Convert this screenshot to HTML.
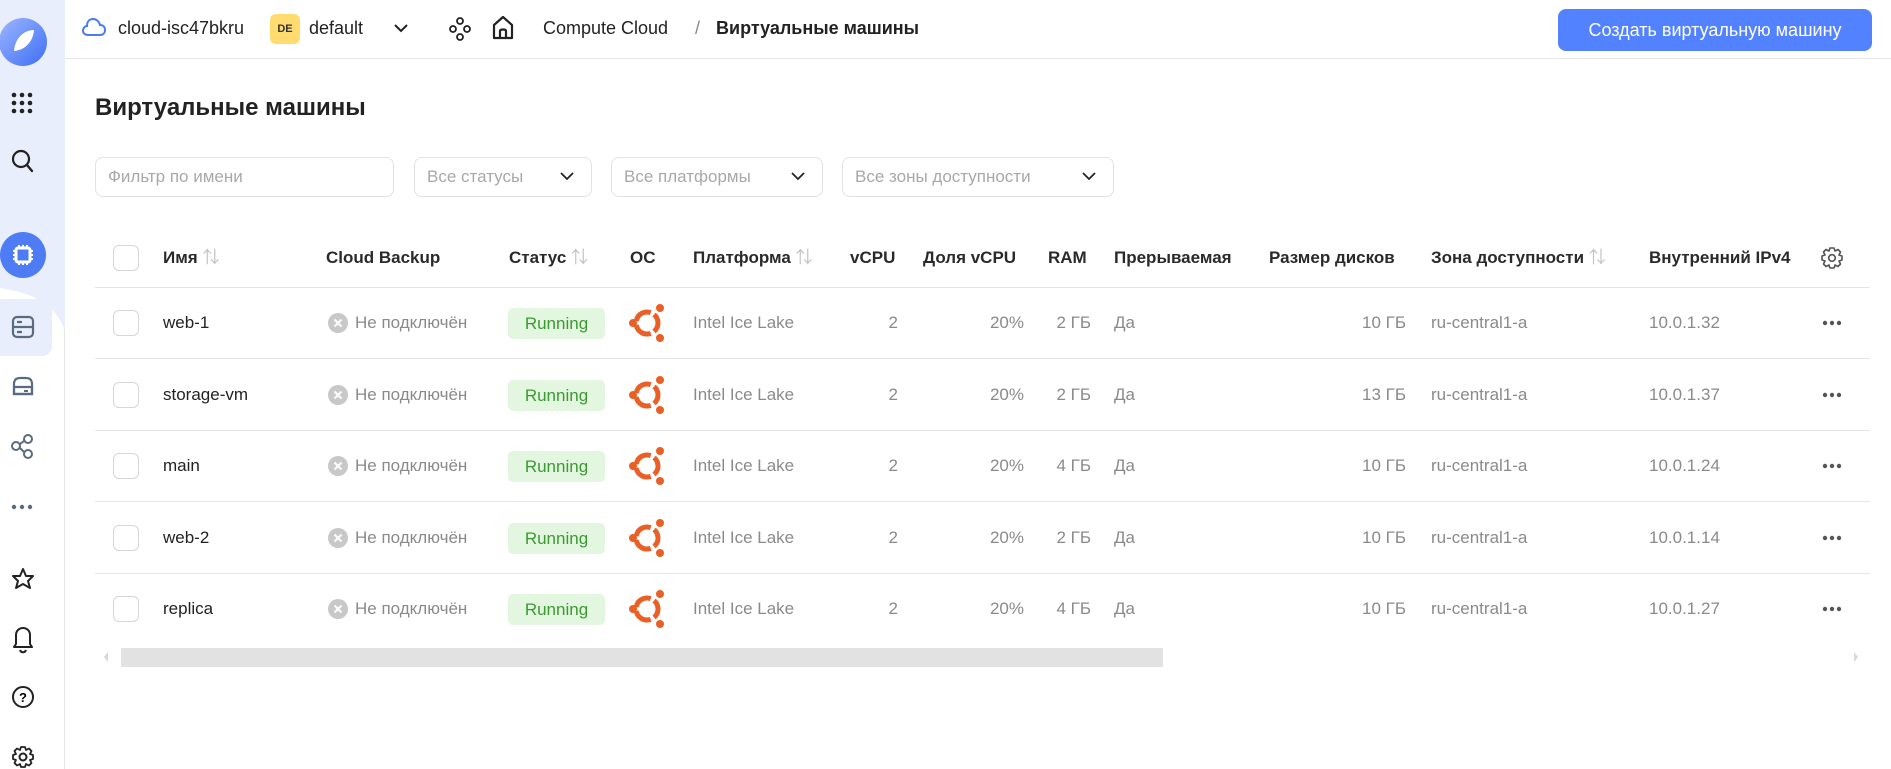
<!DOCTYPE html>
<html><head><meta charset="utf-8">
<style>
*{box-sizing:border-box;margin:0;padding:0}
body{width:1891px;height:769px;overflow:hidden;background:#fff;font-family:"Liberation Sans","Noto Sans CJK SC",sans-serif;color:#222;position:relative}
.a{position:absolute;white-space:nowrap}
.sb{position:absolute;left:0;top:0;width:65px;height:769px;border-right:1px solid #e6e6e6;background:#fff}
.t{font-size:17px;line-height:20px}
.g{color:#8a8a8a}
.h{font-size:17px;font-weight:bold;color:#2a2a2a;line-height:20px}
.ar{color:#c2c2c2;font-weight:normal}
.line{position:absolute;left:95px;width:1775px;height:1px;background:#e5e5e5}
.cb{position:absolute;left:113px;width:26px;height:26px;border:1px solid #d6d6d6;border-radius:6px;background:#fff}
.badge{position:absolute;left:508px;width:97px;height:31px;background:#e3f6df;border-radius:5px;color:#3b9a32;font-size:17px;line-height:31px;text-align:center}
.flt{position:absolute;top:157px;height:40px;border:1px solid #e2e2e2;border-radius:8px;font-size:17px;color:#a8a8a8;line-height:38px;padding-left:12px}
.chev{position:absolute;right:16px;top:12px}
</style></head><body>

<div class="sb">
  <svg class="a" style="left:0;top:0" width="65" height="330" viewBox="0 0 65 330">
    <path d="M0 0H65V330C55 305 35 293 0 288Z" fill="#e9eefc"/>
    <defs><linearGradient id="lg" x1="0" y1="0" x2="1" y2="1"><stop offset="0" stop-color="#9db6ff"/><stop offset="1" stop-color="#3d6ef5"/></linearGradient></defs>
    <circle cx="23" cy="42" r="24" fill="url(#lg)"/>
    <path d="M14 51C15 38 24 30 34 30C33 42 25 50 14 51Z" fill="#fff"/>
    <g fill="#222"><circle cx="14" cy="95" r="2.3"/><circle cx="22" cy="95" r="2.3"/><circle cx="30" cy="95" r="2.3"/><circle cx="14" cy="103" r="2.3"/><circle cx="22" cy="103" r="2.3"/><circle cx="30" cy="103" r="2.3"/><circle cx="14" cy="111" r="2.3"/><circle cx="22" cy="111" r="2.3"/><circle cx="30" cy="111" r="2.3"/></g>
    <circle cx="21" cy="159" r="8" fill="none" stroke="#222" stroke-width="2.2"/><path d="M27 165L32 171" stroke="#222" stroke-width="2.4" stroke-linecap="round"/>
    <circle cx="23" cy="255" r="23" fill="#4e7cf5"/>
    <rect x="16" y="248" width="14" height="14" rx="2" fill="none" stroke="#fff" stroke-width="3"/>
    <path d="M19 245v3M23 245v3M27 245v3M19 262v3M23 262v3M27 262v3M13 251h3M13 255h3M13 259h3M30 251h3M30 255h3M30 259h3" stroke="#fff" stroke-width="2"/>
  </svg>
  <div class="a" style="left:0;top:299px;width:52px;height:57px;background:#e9eefc;border-radius:0 10px 10px 0"></div>
  <svg class="a" style="left:0;top:299px" width="52" height="57"><rect x="13" y="18" width="20" height="20" rx="4" fill="none" stroke="#5a6b80" stroke-width="2.2"/><path d="M13 28H33M17 23h5M17 33h5" stroke="#5a6b80" stroke-width="2.2"/></svg>
  <svg class="a" style="left:0;top:370px" width="65" height="399">
    <path d="M14 24V14C14 10 16 8 20 8H26C30 8 32 10 32 14V24Z" fill="none" stroke="#5a6b80" stroke-width="2.2"/><path d="M14 17H32V24H14Z" fill="none" stroke="#5a6b80" stroke-width="2.2"/><path d="M24 21h4" stroke="#5a6b80" stroke-width="2"/>
    <circle cx="16" cy="76" r="4" fill="none" stroke="#5a6b80" stroke-width="2"/><circle cx="28" cy="69" r="4" fill="none" stroke="#5a6b80" stroke-width="2"/><circle cx="28" cy="84" r="4" fill="none" stroke="#5a6b80" stroke-width="2"/><path d="M20 74L24 71M20 78L24 82" stroke="#5a6b80" stroke-width="2"/>
    <g fill="#5a6b80"><circle cx="14" cy="137" r="2.2"/><circle cx="22" cy="137" r="2.2"/><circle cx="30" cy="137" r="2.2"/></g>
    <path d="M23 199L26 206L33 206L28 211L30 218L23 214L16 218L18 211L13 206L20 206Z" fill="none" stroke="#222" stroke-width="2" stroke-linejoin="round"/>
    <path d="M16 274V265C16 261 19 258 23 258C27 258 30 261 30 265V274L32 277H14Z M20 280C21 283 25 283 26 280" fill="none" stroke="#222" stroke-width="2" stroke-linejoin="round"/>
    <circle cx="23" cy="327" r="10" fill="none" stroke="#222" stroke-width="2"/><text x="23" y="332" text-anchor="middle" font-size="13" font-weight="bold" font-family="Liberation Sans">?</text>
    <circle cx="23" cy="387" r="3.5" fill="none" stroke="#222" stroke-width="2"/><path d="M21 377h4l1 3l3-1.5l2.5 2.5l-1.5 3l3 1v4l-3 1l1.5 3l-2.5 2.5l-3-1.5l-1 3h-4l-1-3l-3 1.5l-2.5-2.5l1.5-3l-3-1v-4l3-1l-1.5-3l2.5-2.5l3 1.5z" fill="none" stroke="#222" stroke-width="1.8" stroke-linejoin="round"/>
  </svg>
</div>

<div class="a" style="left:65px;top:58px;width:1826px;height:1px;background:#e6e6e6"></div>
<svg class="a" style="left:82px;top:17px" width="24" height="22"><path d="M6 18H18C21 18 23 16 23 13C23 10 21 8 18 8C17 4 14 2 11 2C7 2 5 5 5 9C3 9 1 11 1 14C1 16 3 18 6 18Z" fill="none" stroke="#4a7cf0" stroke-width="2"/></svg>
<div class="a t" style="left:118px;top:18px;font-size:18px">cloud-isc47bkru</div>
<div class="a" style="left:270px;top:14px;width:30px;height:30px;background:#ffdb70;border-radius:6px;font-size:11px;font-weight:bold;text-align:center;line-height:30px;color:#333">DE</div>
<div class="a t" style="left:309px;top:18px;font-size:18px">default</div>
<svg class="a" style="left:393px;top:22px" width="16" height="12"><path d="M2 3L8 9L14 3" fill="none" stroke="#222" stroke-width="2"/></svg>
<svg class="a" style="left:448px;top:16px" width="24" height="26"><circle cx="12" cy="5" r="3" fill="none" stroke="#222" stroke-width="1.8"/><circle cx="5" cy="13" r="3" fill="none" stroke="#222" stroke-width="1.8"/><circle cx="19" cy="13" r="3" fill="none" stroke="#222" stroke-width="1.8"/><circle cx="12" cy="21" r="3" fill="none" stroke="#222" stroke-width="1.8"/></svg>
<svg class="a" style="left:491px;top:15px" width="24" height="26"><path d="M3 23V10L12 2L21 10V23Z" fill="none" stroke="#222" stroke-width="2.2" stroke-linejoin="round"/><path d="M9 23V16C9 14 15 14 15 16V23" fill="none" stroke="#222" stroke-width="2.2"/></svg>
<div class="a t" style="left:543px;top:18px;font-size:18px">Compute Cloud</div>
<div class="a t g" style="left:695px;top:18px;font-size:18px">/</div>
<div class="a t" style="left:716px;top:18px;font-size:18px;font-weight:bold">Виртуальные машины</div>
<div class="a" style="left:1558px;top:9px;width:314px;height:42px;background:#5282ff;border-radius:8px;color:#fff;font-size:18px;line-height:42px;text-align:center">Создать виртуальную машину</div>

<div class="a" style="left:95px;top:94px;font-size:24px;font-weight:bold;color:#222">Виртуальные машины</div>

<div class="flt" style="left:95px;width:299px">Фильтр по имени</div>
<div class="flt" style="left:414px;width:178px">Все статусы<svg class="chev" width="16" height="12"><path d="M2 3L8 9L14 3" fill="none" stroke="#222" stroke-width="1.8"/></svg></div>
<div class="flt" style="left:611px;width:212px">Все платформы<svg class="chev" width="16" height="12"><path d="M2 3L8 9L14 3" fill="none" stroke="#222" stroke-width="1.8"/></svg></div>
<div class="flt" style="left:842px;width:272px">Все зоны доступности<svg class="chev" width="16" height="12"><path d="M2 3L8 9L14 3" fill="none" stroke="#222" stroke-width="1.8"/></svg></div>

<div class="cb" style="top:245px"></div>
<div class="a h" style="left:163px;top:248px">Имя <span class="ar">⇅</span></div>
<div class="a h" style="left:326px;top:248px">Cloud Backup</div>
<div class="a h" style="left:509px;top:248px">Статус <span class="ar">⇅</span></div>
<div class="a h" style="left:630px;top:248px">ОС</div>
<div class="a h" style="left:693px;top:248px">Платформа <span class="ar">⇅</span></div>
<div class="a h" style="left:850px;top:248px">vCPU</div>
<div class="a h" style="left:923px;top:248px">Доля vCPU</div>
<div class="a h" style="left:1048px;top:248px">RAM</div>
<div class="a h" style="left:1114px;top:248px">Прерываемая</div>
<div class="a h" style="left:1269px;top:248px">Размер дисков</div>
<div class="a h" style="left:1431px;top:248px">Зона доступности <span class="ar">⇅</span></div>
<div class="a h" style="left:1649px;top:248px;width:150px;overflow:hidden">Внутренний IPv4</div>
<svg class="a" style="left:1820px;top:246px" width="24" height="24"><circle cx="12" cy="12" r="3.3" fill="none" stroke="#555" stroke-width="1.7"/><path d="M10 2h4l1 3l3-1.5l2.5 2.5l-1.5 3l3 1v4l-3 1l1.5 3l-2.5 2.5l-3-1.5l-1 3h-4l-1-3l-3 1.5l-2.5-2.5l1.5-3l-3-1v-4l3-1l-1.5-3l2.5-2.5l3 1.5z" fill="none" stroke="#555" stroke-width="1.6" stroke-linejoin="round"/></svg>
<div class="line" style="top:287px"></div>

<div id="rows"></div>
<script>
var d=[["web-1","2 ГБ","10 ГБ","10.0.1.32",323],["storage-vm","2 ГБ","13 ГБ","10.0.1.37",395],["main","4 ГБ","10 ГБ","10.0.1.24",466],["web-2","2 ГБ","10 ГБ","10.0.1.14",538],["replica","4 ГБ","10 ГБ","10.0.1.27",609]];
var h="";
d.forEach(function(r,i){var y=r[4],ty=y-10;
h+='<div class="cb" style="top:'+(y-13)+'px"></div>';
h+='<div class="a t" style="left:163px;top:'+ty+'px">'+r[0]+'</div>';
h+='<svg class="a" style="left:327px;top:'+(y-11)+'px" width="22" height="22"><circle cx="11" cy="11" r="10" fill="#c8c8c8"/><path d="M7.5 7.5L14.5 14.5M14.5 7.5L7.5 14.5" stroke="#fff" stroke-width="2"/></svg>';
h+='<div class="a t g" style="left:355px;top:'+ty+'px">Не подключён</div>';
h+='<div class="badge" style="top:'+(y-15)+'px">Running</div>';
h+='<svg class="a" style="left:626px;top:'+(y-22)+'px" width="42" height="44"><g fill="none" stroke="#e95f25" stroke-width="5"><path d="M24.76 32.34A11 11 0 0 1 10.17 23.91"/><path d="M10.17 20.09A11 11 0 0 1 24.76 11.66"/><path d="M28.07 13.57A11 11 0 0 1 28.07 30.43"/></g><circle cx="7" cy="22" r="4" fill="#e95f25"/><circle cx="34" cy="7" r="4" fill="#e95f25"/><circle cx="34" cy="37" r="4" fill="#e95f25"/></svg>';
h+='<div class="a t g" style="left:693px;top:'+ty+'px">Intel Ice Lake</div>';
h+='<div class="a t g" style="left:850px;width:48px;text-align:right;top:'+ty+'px">2</div>';
h+='<div class="a t g" style="left:950px;width:74px;text-align:right;top:'+ty+'px">20%</div>';
h+='<div class="a t g" style="left:1030px;width:61px;text-align:right;top:'+ty+'px">'+r[1]+'</div>';
h+='<div class="a t g" style="left:1114px;top:'+ty+'px">Да</div>';
h+='<div class="a t g" style="left:1300px;width:106px;text-align:right;top:'+ty+'px">'+r[2]+'</div>';
h+='<div class="a t g" style="left:1431px;top:'+ty+'px">ru-central1-a</div>';
h+='<div class="a t g" style="left:1649px;top:'+ty+'px">'+r[3]+'</div>';
h+='<svg class="a" style="left:1820px;top:'+(y-4)+'px" width="24" height="8"><circle cx="5" cy="4" r="2.2" fill="#555"/><circle cx="12" cy="4" r="2.2" fill="#555"/><circle cx="19" cy="4" r="2.2" fill="#555"/></svg>';
if(i<4)h+='<div class="line" style="top:'+(y+35)+'px"></div>';
});
document.getElementById("rows").innerHTML=h;
</script>

<svg class="a" style="left:102px;top:651px" width="8" height="12"><path d="M6 1L2 6L6 11Z" fill="#d8d8d8"/></svg>
<div class="a" style="left:121px;top:648px;width:1042px;height:19px;background:#e2e2e2"></div>
<svg class="a" style="left:1852px;top:651px" width="8" height="12"><path d="M2 1L6 6L2 11Z" fill="#d8d8d8"/></svg>
</body></html>
